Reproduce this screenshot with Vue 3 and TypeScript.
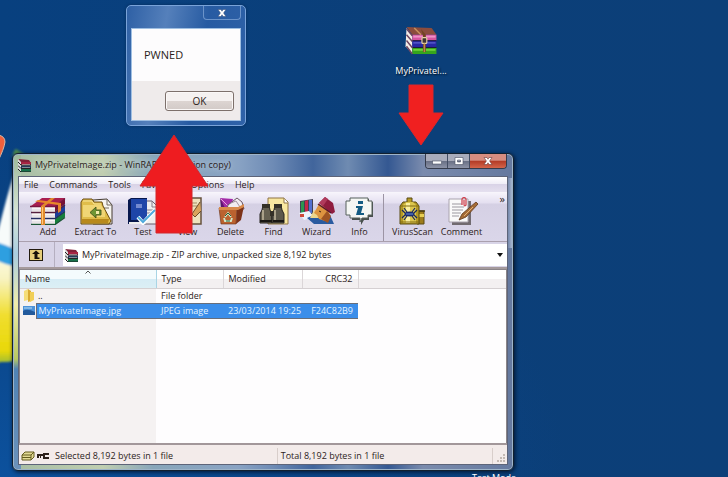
<script setup lang="ts">
interface Tool {
  id: string
  label: string
  size: 'small' | 'medium' | 'large'
}

const menus: string[] = ['File', 'Commands', 'Tools', 'Favorites', 'Options', 'Help']

const tools: Tool[] = [
  { id: 'add', label: 'Add', size: 'medium' },
  { id: 'extract', label: 'Extract To', size: 'large' },
  { id: 'test', label: 'Test', size: 'medium' },
  { id: 'view', label: 'View', size: 'small' },
  { id: 'delete', label: 'Delete', size: 'small' },
  { id: 'find', label: 'Find', size: 'small' },
  { id: 'wizard', label: 'Wizard', size: 'small' },
  { id: 'info', label: 'Info', size: 'small' },
]

const extraTools: Tool[] = [
  { id: 'virus', label: 'VirusScan', size: 'large' },
  { id: 'comment', label: 'Comment', size: 'large' },
]

const groups: Tool[][] = [tools, extraTools]
</script>

<template>
  <main class="desktop">
    <svg class="flag" viewBox="0 0 40 240" aria-hidden="true">
      <defs>
        <linearGradient id="flagYellow" x1="0" y1="0" x2="0" y2="1">
          <stop offset="0" stop-color="#fdfdf6" />
          <stop offset="0.3" stop-color="#f8f3c0" />
          <stop offset="0.6" stop-color="#f1de30" />
          <stop offset="0.9" stop-color="#e8d808" />
          <stop offset="1" stop-color="#9dbb3a" />
        </linearGradient>
        <filter id="glow"><feGaussianBlur stdDeviation="1.2" /></filter>
      </defs>
      <g filter="url(#glow)">
        <path d="M-4 108 C2 86 8 60 15 40 V124 H-4Z" fill="#f7fbfa" />
        <path d="M12 28 C13 22 14 19 16 18 L26 24 H12Z" fill="#4d8b4e" />
        <path d="M-4 112 L16 118 V229 C10 232 4 230 -4 232Z" fill="url(#flagYellow)" />
        <path d="M-4 111 Q6 114 15 118 V135 Q6 134 -4 129Z" fill="#2f9fe0" />
      </g>
      <path d="M-2 4 Q5 5 5 11 Q4 18 -2 30Z" fill="#f0603c" stroke="#d9b9a6" stroke-width="1" />
    </svg>

    <section class="dialog" role="dialog" aria-label="Message">
      <header class="dialog-bar">
        <button class="dialog-close" type="button" aria-label="Close">
          <svg viewBox="0 0 10 8" class="glyph">
            <path d="M1 .5H4L5 2.200 6 .5H9L6.600 4 9 7.500H6L5 5.800 4 7.500H1L3.400 4Z" fill="#fff" stroke="#3c557f" stroke-width=".6" />
          </svg>
        </button>
      </header>
      <div class="dialog-body">
        <p class="message">PWNED</p>
        <footer class="dialog-foot"><button class="ok" type="button">OK</button></footer>
      </div>
    </section>

    <a class="shortcut" href="#archive">
      <svg viewBox="0 0 34 30" class="shortcut-icon" aria-hidden="true">
        <path d="M2 2 L8 10 V29 L1 21Z" fill="#f4eee8" />
        <path d="M2 1 L28 2 33 9 H8Z" fill="#8b4c3d" />
        <path d="M8 9H33V15H8Z" fill="#d6559f" /><path d="M9 10H32V12H9Z" fill="#ee93c8" />
        <path d="M8 15.500H33V22H8Z" fill="#2827a5" /><path d="M9 17H32V18H9Z" fill="#6e73dd" />
        <path d="M8 22.500H33V29H8Z" fill="#36a51c" /><path d="M9 24H32V25.500H9Z" fill="#7bdc42" />
        <path d="M8 15.200H33M8 22.200H33" stroke="#1d1738" />
        <path d="M2 3 L8 10 M2 9 L8 16 M2 15 L8 22.500 M2 21 L8 29" stroke="#6d4560" stroke-width="1.500" />
        <path d="M10 2 L17 9" stroke="#c8925f" stroke-width="1.500" />
        <path d="M17 3 L22 9V27H19V10Z" fill="#714422" />
        <rect x="18" y="12" width="5" height="6" rx="1" fill="#3e3432" stroke="#ead5a7" stroke-width="1.200" />
        <path d="M20.500 18V27" stroke="#b98a4c" stroke-width="1.500" />
      </svg>
      <span>MyPrivateI...</span>
    </a>

    <section id="archive" class="window" aria-label="Archive">
      <header class="titlebar">
        <svg viewBox="0 0 13 13" class="book" aria-hidden="true">
          <path d="M0 0L11 1 13 4H3Z" fill="#822138" />
          <path d="M0 0L3 3V13L0 10Z" fill="#ddd" />
          <path d="M3 3H13V6H3Z" fill="#a62442" /><path d="M3 6.500H13V9H3Z" fill="#243b5b" /><path d="M3 10H13V13H3Z" fill="#17704a" />
          <path d="M0 3L3 6H13M0 6.500L3 9.500H13M0 10L3 13H13" fill="none" stroke="#222" />
          <path d="M4 5.500H12M4 8.500H12" stroke="#c8c3c3" stroke-width=".6" />
        </svg>
        <h1>MyPrivateImage.zip - WinRAR (evaluation copy)</h1>
        <div class="controls">
          <button type="button" class="ctl" aria-label="Minimize">
            <svg viewBox="0 0 10 8" class="glyph"><rect x=".5" y="4" width="9" height="3" fill="#fff" stroke="#4b5064" stroke-width=".6" /></svg>
          </button>
          <button type="button" class="ctl" aria-label="Maximize">
            <svg viewBox="0 0 10 8" class="glyph"><path d="M1 .5H9V7.500H1ZM3.500 3H6.500V5H3.500Z" fill="#fff" fill-rule="evenodd" stroke="#4b5064" stroke-width=".6" /></svg>
          </button>
          <button type="button" class="ctl close" aria-label="Close">
            <svg viewBox="0 0 10 8" class="glyph"><path d="M1 .5H4L5 2.200 6 .5H9L6.600 4 9 7.500H6L5 5.800 4 7.500H1L3.400 4Z" fill="#fff" stroke="#703a38" stroke-width=".6" /></svg>
          </button>
        </div>
      </header>

      <div class="client">
        <nav class="menubar">
          <button v-for="m in menus" :key="m" type="button">{{ m }}</button>
        </nav>

        <div class="toolbar">
          <div v-for="(group, g) in groups" :key="g" class="group">
            <button v-for="t in group" :key="t.id" type="button" class="tool" :class="t.size">
              <svg v-if="t.id === 'add'" viewBox="0 0 36 28" class="icon">
                <path d="M1 9L12 1H35L25 9Z" fill="#a91f50" />
                <path d="M25 9L35 1V7L25 15Z" fill="#761236" /><path d="M25 15L35 7V14L25 21Z" fill="#1b3d9b" /><path d="M25 21L35 14V20L25 28Z" fill="#16803c" />
                <path d="M2 9H25V28H2Z" fill="#f8f5f5" />
                <path d="M2 13H25M2 19H25M2 25H25" stroke="#d9d2d8" />
                <path d="M0 9.500H25L35 1.500" fill="none" stroke="#7c1540" stroke-width="1.600" />
                <path d="M1 15.500H25L35 8" fill="none" stroke="#55203f" stroke-width="1.300" />
                <path d="M1 21.500H25L35 14.500" fill="none" stroke="#232c62" stroke-width="1.300" />
                <path d="M1 27.500H25L35 20.500" fill="none" stroke="#1b5635" stroke-width="1.300" />
                <path d="M11 9L21 1H25L15 9V28H11Z" fill="#e08a2c" /><path d="M5 4.500L8 3 31 6V14L28 16V8Z" fill="#e8862a" /><path d="M12.500 10V27" stroke="#ffc878" />
              </svg>
              <svg v-else-if="t.id === 'extract'" viewBox="0 0 36 28" class="icon">
                <path d="M15 3L29 2 34 8V27H15Z" fill="#f6f4ef" stroke="#443b30" />
                <path d="M29 2V8H34M25 11H31" fill="none" stroke="#776f64" />
                <path d="M3 5L5 2H14L16 5H24L25 9 33 24 31 27H3Z" fill="#e0bd4a" stroke="#6b4c10" />
                <path d="M5 8H23L27 14V20H5Z" fill="#f0d675" /><path d="M4 22H31L30 26H4Z" fill="#b8891c" /><path d="M5 4H14L16 7H23" fill="none" stroke="#f8e69c" />
                <path d="M18 10V13H23V18H18V21L12 15.500Z" fill="#6e9634" stroke="#3b4d18" stroke-width=".8" />
                <path d="M18 14H21V17H18Z" fill="#f2ebac" />
              </svg>
              <svg v-else-if="t.id === 'test'" viewBox="0 0 36 28" class="icon">
                <path d="M18 4H27L32 9V27H18Z" fill="#eee" stroke="#655b68" />
                <path d="M27 4V10H32M22 13H29M22 16H29" fill="none" stroke="#867d8a" />
                <path d="M3 3L6 1H22V24L19 27H3Z" fill="#07174d" /><path d="M6 2H22V23H6Z" fill="#1e45a8" />
                <path d="M4 25H19L22 22V25L20 27H4Z" fill="#eee" /><path d="M11 7H17V11H11Z" fill="#738ad0" />
                <path d="M13 20L18 26 30 13" fill="none" stroke="#fff" stroke-width="4" /><path d="M13 20L18 25 30 13" fill="none" stroke="#4fa9dc" stroke-width="2" />
              </svg>
              <svg v-else-if="t.id === 'view'" viewBox="0 0 36 28" class="icon">
                <path d="M10 1H31V27H10Z" fill="#eee2bd" stroke="#66513c" stroke-width="1.500" />
                <path d="M14 6H27M14 9H27" stroke="#a38b65" /><path d="M30 5L22 17 25 20 31 14" fill="#d9a35c" stroke="#6f4c28" />
              </svg>
              <svg v-else-if="t.id === 'delete'" viewBox="0 0 36 28" class="icon">
                <path d="M8 11L7 2 16 9Z" fill="#5c176d" /><path d="M7 1L20 2 18 11H12Z" fill="#a32ba8" /><path d="M8 2L16 10" stroke="#e7a5df" />
                <path d="M15 8L24 1 29 5 31 12H14Z" fill="#f2edf0" stroke="#6c5966" /><path d="M18 6L23 4 27 10" fill="none" stroke="#a393a1" />
                <path d="M6 11H24L23 27H8Z" fill="#bb622f" stroke="#673016" stroke-width=".6" /><path d="M24 11L31 9 28 23 23 27Z" fill="#7c3218" />
                <path d="M6 10H25L31 7V10L25 13H6Z" fill="#d98a4b" />
                <path d="M12 20L15 16 18 20M19 21L18 24H12L11 21" fill="none" stroke="#d3e8c8" stroke-width="1.800" /><path d="M12 19L15 16 18 19M13 24H17" fill="none" stroke="#275d36" />
              </svg>
              <svg v-else-if="t.id === 'find'" viewBox="0 0 36 28" class="icon">
                <path d="M12 1H28L32 5V27H12Z" fill="#f8e7a0" stroke="#8f7544" /><path d="M28 1V6H32" fill="#fff" stroke="#8f7544" />
                <path d="M7 8H13L14 13 16 17V26H4V17L6 13Z" fill="#645f50" stroke="#25221e" />
                <path d="M19 8H25L26 13 28 17V26H16V17L18 13Z" fill="#5c584b" stroke="#25221e" />
                <path d="M6 7H14V11H6ZM18 7H26V11H18ZM14 14H18V19H14Z" fill="#343027" /><path d="M7 13V24M19 13V24" stroke="#aaa18a" stroke-width="2" /><path d="M4 24H16M17 24H28" stroke="#191713" stroke-width="2" />
              </svg>
              <svg v-else-if="t.id === 'wizard'" viewBox="0 0 36 28" class="icon">
                <path d="M1 4L14 2V17L1 18Z" fill="#424153" /><path d="M2 5L5 4V16H2Z" fill="#2c9650" /><path d="M6 4L9 3V16H6Z" fill="#c42748" /><path d="M10 3L13 3V16H10Z" fill="#526fcf" />
                <path d="M0 16L10 14 15 20 5 23Z" fill="#eef2fa" /><path d="M1 17H5V20H1Z" fill="#cf4938" />
                <path d="M8 21L17 17 24 20 31 18 35 27H15Z" fill="#2a5ba0" /><path d="M11 21L15 13 18 14 20 21Z" fill="#edd58d" />
                <path d="M20 7L29 12 31 18 26 24 20 22 18 18 15 16Z" fill="#dd9440" /><path d="M28 14L32 19 29 26 22 22Z" fill="#9f5523" /><path d="M20 14L22 15" stroke="#3c210f" />
                <path d="M20 6L26 0 34 6 36 15 33 17Z" fill="#8f1c3e" /><path d="M20 6L26 0 29 2 24 9Z" fill="#b03a5c" /><path d="M19 7L32 16" stroke="#54142b" stroke-width="1.500" />
              </svg>
              <svg v-else-if="t.id === 'info'" viewBox="0 0 36 28" class="icon">
                <path d="M10 2H27V5H31V20H27V23H22L19 28V23H10Z" fill="#49504d" />
                <path d="M8 1H26V4H30V18H26V21H20L18 25V21H8V18H4V4H8Z" fill="#f5f7f4" stroke="#56605c" />
                <path d="M16 4H21V7H16ZM14 9H21L19 16H22V18H14L16 11H14Z" fill="#145c83" />
              </svg>
              <svg v-else-if="t.id === 'virus'" viewBox="0 0 36 28" class="icon">
                <path d="M23 14H29V27H22Z" fill="#9d7c1b" stroke="#5b4a13" /><path d="M23 17H29V20H23Z" fill="#e7ce52" /><path d="M22 14H30" stroke="#4a3b10" stroke-width="1.500" />
                <path d="M12 1H17V5H21L24 9V27H5V9L8 5H12Z" fill="#b69a25" stroke="#584a13" />
                <path d="M8 8L11 5H18L21 8V26H8Z" fill="#dcc64f" /><path d="M11 6H15V26H11Z" fill="#fbf0a0" />
                <path d="M5 9H24M5 25H24" stroke="#806a15" />
                <ellipse cx="14.500" cy="17" rx="5" ry="2.500" fill="#192b73" /><path d="M12 15L9 11M17 15L20 11M10 16L7 13M19 16L22 13M12 19L9 23M17 19L20 23M10 18L7 21M19 18L22 21" stroke="#17265e" stroke-width="1.200" /><path d="M11 17H18" stroke="#6a93d8" />
              </svg>
              <svg v-else viewBox="0 0 36 28" class="icon">
                <path d="M8 4H27V28H8Z" fill="#716b70" /><path d="M5 2H24V25H5Z" fill="#fafafa" stroke="#aaa4ae" />
                <path d="M8 7H18M8 10H20M8 13H19M8 16H17M8 19H15" stroke="#9b989f" />
                <path d="M18 8V2Q20-1 22 2V8Q20 10 20 7V3" fill="none" stroke="#cf4652" stroke-width="1.300" />
                <path d="M32 5L34 7 22 20 15 23 18 17Z" fill="#a46b36" stroke="#5f381d" stroke-width=".8" /><path d="M29 10L20 19" stroke="#e2b177" />
              </svg>
              <span>{{ t.label }}</span>
            </button>
          </div>
          <button type="button" class="more" aria-label="More tools">»</button>
        </div>

        <div class="pathbar">
          <div class="upbox">
            <button type="button" class="up" aria-label="Up one level">
              <svg viewBox="0 0 14 12" class="up-icon"><rect x=".5" y=".5" width="13" height="11" fill="#e5cd7a" stroke="#221a0d" /><path d="M7 1.500L11 5H8.500V8.500H10.500V10H5.500V5H3Z" fill="#15100a" /></svg>
            </button>
          </div>
          <div class="path">
            <svg viewBox="0 0 13 13" class="book" aria-hidden="true">
              <path d="M0 0L11 1 13 4H3Z" fill="#822138" />
              <path d="M0 0L3 3V13L0 10Z" fill="#ddd" />
              <path d="M3 3H13V6H3Z" fill="#a62442" /><path d="M3 6.500H13V9H3Z" fill="#243b5b" /><path d="M3 10H13V13H3Z" fill="#17704a" />
              <path d="M0 3L3 6H13M0 6.500L3 9.500H13M0 10L3 13H13" fill="none" stroke="#222" />
              <path d="M4 5.500H12M4 8.500H12" stroke="#c8c3c3" stroke-width=".6" />
            </svg>
            <select aria-label="Current path">
              <option>MyPrivateImage.zip - ZIP archive, unpacked size 8,192 bytes</option>
            </select>
            <svg viewBox="0 0 6 4" class="caret" aria-hidden="true"><path d="M0 0H6L3 4Z" fill="#111" /></svg>
          </div>
        </div>

        <div class="list">
          <table>
            <colgroup>
              <col class="c-icon" /><col class="c-name" /><col class="c-type" /><col class="c-mod" /><col class="c-crc" /><col />
            </colgroup>
            <thead>
              <tr>
                <th colspan="2" class="sorted">
                  Name
                  <svg viewBox="0 0 6 4" class="sort" aria-hidden="true"><path d="M.5 3.500L3 1 5.500 3.500" fill="none" stroke="#555" /></svg>
                </th>
                <th>Type</th><th>Modified</th><th class="num">CRC32</th><th class="rest"></th>
              </tr>
            </thead>
            <tbody>
              <tr>
                <td class="ico">
                  <svg viewBox="0 0 12 13" class="file"><path d="M1 2L5 0V11L1 12Z" fill="#f5dd79" /><path d="M5 0L8 2V12L5 13Z" fill="#d9aa31" /><path d="M7 3H11V11L7 13Z" fill="#f1cf58" /></svg>
                </td>
                <td>..</td><td>File folder</td><td></td><td></td><td></td>
              </tr>
              <tr class="selected">
                <td class="ico">
                  <svg viewBox="0 0 12 13" class="file"><rect x="0" y="2" width="12" height="9" fill="#4e93d9" /><path d="M0 7Q4 4 12 8V11H0Z" fill="#225a9c" /><path d="M1 4H9" stroke="#b5dcf5" /></svg>
                </td>
                <td class="first">MyPrivateImage.jpg</td><td>JPEG image</td><td>23/03/2014 19:25</td><td class="num last">F24C82B9</td><td></td>
              </tr>
            </tbody>
          </table>
        </div>

        <footer class="status">
          <svg viewBox="0 0 30 10" class="status-icon" aria-hidden="true">
            <path d="M1 4L4 1H13V6L10 9H1Z" fill="#e2d994" stroke="#645c1e" /><path d="M1 4H10L13 1M10 4V9M1 6.500H10" fill="none" stroke="#645c1e" />
            <path d="M16 3H22V5H20V7H19V5H18V7H16Z" fill="#2c211b" /><path d="M28 3H23V7H28" fill="none" stroke="#2c211b" stroke-width="2" />
          </svg>
          <span class="pane first-pane">Selected 8,192 bytes in 1 file</span>
          <span class="pane">Total 8,192 bytes in 1 file</span>
          <svg viewBox="0 0 14 18" class="grip" aria-hidden="true"><path d="M10 8H12M7 11H9M10 11H12M4 14H6M7 14H9M10 14H12" stroke="#c4b9b3" stroke-width="2" /></svg>
        </footer>
      </div>
    </section>

    <svg class="arrow-up" viewBox="0 0 70 100" aria-hidden="true">
      <path d="M35 1L69 52H53V99H17V52H1Z" fill="#ee1c20" stroke="#d2262b" stroke-linejoin="round" />
    </svg>
    <svg class="arrow-down" viewBox="0 0 46 62" aria-hidden="true">
      <path d="M11 1H35V29H45L23 61 1 29H11Z" fill="#f02020" stroke="#dc262a" stroke-linejoin="round" />
    </svg>
    <p class="mode">Test Mode</p>
  </main>
</template>

<style>
body {
  margin: 0;
}
</style>

<style scoped>
.desktop {
  position: relative;
  height: 100vh;
  overflow: hidden;
  font-family: "Open Sans", "Noto Sans", sans-serif;
  font-size: 9px;
  line-height: 12px;
  color: #2c1c1a;
  background: radial-gradient(ellipse at 0 100%, #0c519d 0, #0a4486 30%, transparent 55%), linear-gradient(90deg, #08407f, #0b3f79 60%, #0c3f78);
}
* {
  box-sizing: border-box;
}
button,
select {
  font: inherit;
  color: inherit;
  border: 0;
  margin: 0;
  padding: 0;
  background: none;
}
h1,
p {
  margin: 0;
  font-weight: 400;
}
svg {
  display: block;
  flex: none;
}
.flag {
  position: absolute;
  left: 0;
  top: 131px;
  width: 40px;
  height: 240px;
}
.glyph {
  width: 10px;
  height: 8px;
}

.dialog {
  position: absolute;
  left: 126px;
  top: 5px;
  width: 120px;
  padding: 0 4px 4px;
  border: 1px solid #79a3d9;
  border-radius: 5px;
  background: linear-gradient(100deg, #2e60a5, #5580bb 30%, #275ba2 60%, #2f62a8);
  box-shadow: 0 0 3px #062b5c;
}
.dialog-bar {
  display: flex;
  justify-content: flex-end;
  height: 22px;
}
.dialog-close {
  display: grid;
  place-items: center;
  width: 38px;
  height: 14px;
  border: 1px solid #6b93c9;
  border-top: 0;
  border-radius: 0 0 4px 4px;
}
.dialog-body {
  border: 1px solid #9fbfe2;
  background: #fdfcfd;
}
.message {
  padding: 17px 12px 18px;
  font-size: 11px;
  line-height: 17px;
}
.dialog-foot {
  display: flex;
  justify-content: flex-end;
  padding: 10px 6px 9px;
  background: #efebeb;
}
.ok {
  width: 69px;
  height: 20px;
  font-size: 10px;
  border: 1px solid #7d706b;
  border-radius: 3px;
  background: linear-gradient(#f5f1f0 50%, #ddd5d2 50%, #d2cac7);
  box-shadow: inset 0 0 0 1px #fbf8f7;
}

.shortcut {
  position: absolute;
  left: 391px;
  top: 26px;
  width: 60px;
  display: flex;
  flex-direction: column;
  align-items: center;
  gap: 10px;
  color: #fff;
  text-decoration: none;
  text-shadow: 1px 1px 2px #000;
}
.shortcut-icon {
  width: 34px;
  height: 29px;
}

.window {
  position: absolute;
  left: 12px;
  right: 214px;
  top: 153px;
  bottom: 6px;
  display: flex;
  flex-direction: column;
  padding: 0 5px 5px;
  border: 1px solid #12202f;
  border-radius: 6px;
  background:
    linear-gradient(90deg, transparent, #b3c1d8) right 24px / 6px 70px no-repeat,
    linear-gradient(#9cb899 0, #d7e5d5 60px, #a9cde0 100px, #f0ecab 150px, #b8c862 205px, #4f83b5 215px, #6b92bb) 0 0 / 8px 100% no-repeat,
    linear-gradient(90deg, #a6bda4, #c0ceb0 90px, #88a6ba 140px, #89a3c4 225px, #6e8bb5 260px, #41659c 300px, #6f8bb1 335px, #345892 375px, #7a8bad 410px, #65799f);
  box-shadow: inset 0 0 0 1px #9db4c9, 1px 1px 4px #03152e;
}
.titlebar {
  display: flex;
  align-items: center;
  height: 22px;
  gap: 4px;
}
.book {
  width: 13px;
  height: 13px;
}
.titlebar h1 {
  flex: 1;
  font-size: 9px;
  white-space: nowrap;
  text-shadow: 0 0 6px #dce8ee;
}
.controls {
  display: flex;
  align-self: flex-start;
  margin-right: 1px;
  border: 1px solid #353b4b;
  border-top: 0;
  border-radius: 0 0 4px 4px;
  overflow: hidden;
}
.ctl {
  display: grid;
  place-items: center;
  width: 22px;
  height: 14px;
  border-right: 1px solid #434d63;
  background: linear-gradient(#a9acbb 50%, #686f84 50%, #8d93a7);
}
.close {
  width: 36px;
  border-right: 0;
  background: linear-gradient(#d78d80 45%, #b33a25 50%, #d4654a);
}

.client {
  flex: 1;
  display: flex;
  flex-direction: column;
  min-height: 0;
  border: 1px solid #5d6479;
  background: #d8d4e7;
}
.menubar {
  display: flex;
  gap: 11px;
  height: 15px;
  padding-left: 5px;
  background: linear-gradient(#fff, #f0edf7 45%, #d9d3e7 50%, #e5e0ef);
}
.toolbar {
  display: flex;
  height: 50px;
  padding: 1px 0 0 6px;
  border-top: 1px solid #f7f5fb;
  border-bottom: 1px solid #aaa0ae;
  background: linear-gradient(#f6f3fb, #e4dff0 10px, #d5d0e4 11px, #dad6e9);
}
.group {
  display: flex;
}
.group + .group {
  margin-left: 2px;
  padding-left: 4px;
  border-left: 1px solid #9c94a4;
}
.tool {
  display: flex;
  flex-direction: column;
  align-items: center;
  gap: 1px;
  padding-top: 3px;
  white-space: nowrap;
}
.small {
  width: 43px;
}
.medium {
  width: 46px;
}
.large {
  width: 49px;
}
.icon {
  width: 36px;
  height: 28px;
}
.more {
  align-self: flex-start;
  margin-left: auto;
  padding-right: 2px;
  font-size: 11px;
  line-height: 10px;
}
.pathbar {
  display: flex;
  height: 27px;
  border-bottom: 2px solid #a59a9c;
}
.upbox {
  display: flex;
  align-items: center;
  width: 36px;
  padding-left: 10px;
  border-right: 1px solid #b5afc0;
}
.up-icon {
  width: 14px;
  height: 12px;
}
.path {
  flex: 1;
  display: flex;
  align-items: center;
  gap: 4px;
  margin: 2px 0 1px 8px;
  padding: 0 4px 0 2px;
  background: #fff;
}
.path select {
  flex: 1;
  min-width: 0;
  appearance: none;
}
.caret {
  width: 6px;
  height: 4px;
}

.list {
  flex: 1;
  min-height: 0;
  border: 1px solid #8b8589;
  border-width: 1px 1px 0;
  background: linear-gradient(90deg, #f5f2f2 136px, #fefdfe 136px);
}
table {
  width: 100%;
  table-layout: fixed;
  border-collapse: collapse;
}
.c-icon {
  width: 16px;
}
.c-name {
  width: 120px;
}
.c-type {
  width: 67px;
}
.c-mod {
  width: 79px;
}
.c-crc {
  width: 56px;
}
th {
  position: relative;
  height: 18px;
  padding: 0 5px;
  font-weight: 400;
  text-align: left;
  border-right: 1px solid #dbd6d8;
  border-bottom: 1px solid #d5d0d2;
  background: linear-gradient(#fff 50%, #f3f0f1 50%);
}
.sorted {
  background: linear-gradient(#f4fbfd 50%, #d6ecf5 50%, #dceff5);
  border-right-color: #a9d5e5;
}
.rest {
  border-right: 0;
}
.sort {
  position: absolute;
  left: 65px;
  top: 0;
  width: 6px;
  height: 4px;
}
td {
  height: 15px;
  padding: 0 5px;
  white-space: nowrap;
}
td:nth-child(2) {
  padding: 0 2px;
}
.ico {
  padding: 0 0 0 3px;
}
.num {
  text-align: right;
}
.file {
  width: 12px;
  height: 13px;
}
.selected td:not(.ico):not(:last-child) {
  color: #e6f5ff;
  background: #3b8eea;
  border: 1px solid #686e7a;
  border-width: 1px 0;
}
.selected td.first {
  border-left-width: 1px !important;
}

.status {
  display: flex;
  align-items: center;
  height: 21px;
  padding: 2px 0 0 2px;
  border-top: 2px solid #a2979a;
  background: #f3ebea;
}
.status-icon {
  width: 30px;
  height: 10px;
}
.pane {
  flex: 20;
  padding: 2px 3px;
  border-right: 1px solid #d8cecb;
}
.first-pane {
  flex: 21;
  margin-left: 1px;
}
.grip {
  width: 14px;
  height: 18px;
}

.arrow-up {
  position: absolute;
  left: 139px;
  top: 134px;
  width: 70px;
  height: 100px;
}
.arrow-down {
  position: absolute;
  left: 398px;
  top: 84px;
  width: 46px;
  height: 62px;
}
.mode {
  position: absolute;
  right: 212px;
  top: 472px;
  color: #fff;
}
</style>
